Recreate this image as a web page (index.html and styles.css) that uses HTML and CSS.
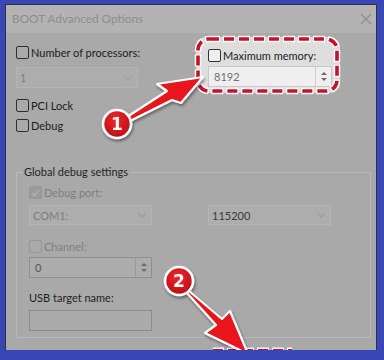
FILE: index.html
```html
<!DOCTYPE html>
<html>
<head>
<meta charset="utf-8">
<link rel="stylesheet" href="styles.css">
</head>
<body>
<div class="frame">
  <div class="titlebar">
    <span class="title">BOOT Advanced Options</span>
    <svg class="close" width="12" height="12" viewBox="0 0 12 12"><path d="M1 1L11 11M11 1L1 11" stroke="#8a8a8a" stroke-width="1.1" fill="none"/></svg>
  </div>
  <div class="body">
    <div class="top">
      <div class="left">
        <div class="check"><span class="box"></span><span>Number of processors:</span></div>
        <div class="combo dis c1"><span>1</span><svg width="10" height="6" viewBox="0 0 10 6"><path d="M1 1L5 5L9 1" stroke="#9c9c9c" stroke-width="1.2" fill="none"/></svg></div>
        <div class="check pci"><span class="box"></span><span>PCI Lock</span></div>
        <div class="check dbg"><span class="box"></span><span>Debug</span></div>
      </div>
      <div class="hl">
        <div class="check"><span class="box lightbox"></span><span>Maximum memory:</span></div>
        <div class="spin hlspin"><span class="val">8192</span><div class="btns"><span class="up"></span><span class="down"></span></div></div>
      </div>
    </div>
    <fieldset class="group">
      <legend>Global debug settings</legend>
      <div class="inner">
        <div class="check disc"><span class="box checked"><svg width="9" height="8" viewBox="0 0 9 8"><path d="M1 4L3.5 6.5L8 1" stroke="#b0b0b0" stroke-width="1.3" fill="none"/></svg></span><span>Debug port:</span></div>
        <div class="pair">
          <div class="combo dis gc"><span>COM1:</span><svg width="10" height="6" viewBox="0 0 10 6"><path d="M1 1L5 5L9 1" stroke="#9c9c9c" stroke-width="1.2" fill="none"/></svg></div>
          <div class="combo dis gc dark"><span>115200</span><svg width="10" height="6" viewBox="0 0 10 6"><path d="M1 1L5 5L9 1" stroke="#9c9c9c" stroke-width="1.2" fill="none"/></svg></div>
        </div>
        <div class="check disc chan"><span class="box disbox"></span><span>Channel:</span></div>
        <div class="spin gspin"><span class="val">0</span><div class="btns"><span class="up"></span><span class="down"></span></div></div>
        <div class="lbl">USB target name:</div>
        <div class="textin"></div>
      </div>
    </fieldset>
  </div>
  <svg class="annot" width="384" height="360" viewBox="0 0 384 360">
    <defs>
      <filter id="sh" x="-30%" y="-30%" width="160%" height="160%">
        <feDropShadow dx="1" dy="2" stdDeviation="1.6" flood-color="#000" flood-opacity="0.45"/>
      </filter>
      <radialGradient id="rg" cx="45%" cy="35%" r="70%">
        <stop offset="0" stop-color="#f2252b"/>
        <stop offset="1" stop-color="#b50c18"/>
      </radialGradient>
    </defs>
    <rect x="198" y="39" width="139" height="52" rx="11" fill="none" stroke="#fff" stroke-width="6.5" stroke-dasharray="12 3" stroke-dashoffset="1"/>
    <rect x="198" y="39" width="139" height="52" rx="11" fill="none" stroke="#c5122b" stroke-width="3.6" stroke-dasharray="10 5"/>
    <line x1="213" y1="351" x2="292" y2="351" stroke="#fff" stroke-width="7" stroke-dasharray="12 3" stroke-dashoffset="1"/>
    <line x1="213" y1="351" x2="292" y2="351" stroke="#c5122b" stroke-width="4" stroke-dasharray="10 5"/>
    <g filter="url(#sh)">
      <polygon points="127,117 167,91 157,84 203,77 181,103 172,100 130,121" fill="#e8121c" stroke="#fff" stroke-width="2.2" stroke-linejoin="round"/>
      <circle cx="117" cy="124" r="14" fill="url(#rg)" stroke="#fff" stroke-width="2.6"/>
      <text x="117" y="130" class="num">1</text>
      <polygon points="189,291 222,319 230,311 248,354 205,333 216,325 187,293" fill="#e8121c" stroke="#fff" stroke-width="2.2" stroke-linejoin="round"/>
      <circle cx="179" cy="281" r="14" fill="url(#rg)" stroke="#fff" stroke-width="2.6"/>
      <text x="179" y="287" class="num">2</text>
    </g>
  </svg>
</div>
</body>
</html>
```
FILE: styles.css
```css
* { box-sizing: border-box; }
html, body { margin: 0; padding: 0; }
body {
  width: 384px;
  height: 360px;
  overflow: hidden;
  background: #3a46b4;
  font-family: Lato, "Noto Sans", sans-serif;
  font-size: 11px;
  color: #1c1c1c;
}
.frame {
  position: relative;
  margin: 4px 0 0 5px;
  width: 372px;
  height: 346px;
  overflow: hidden;
  border: 1px solid #2c2f4a;
  border-bottom: none;
  background: #a9a9a9;
}
.titlebar {
  height: 28px;
  background: #b3b3b3;
  display: flex;
  align-items: center;
  justify-content: space-between;
  padding: 0 4px 0 6px;
  color: #8d8d8d;
}
.title { line-height: 16px; font-size: 11.8px; }
.body { padding: 0 0 0 10px; }
.top { display: flex; align-items: flex-start; gap: 58px; }
.left { width: 122px; padding-top: 13px; }
.hl {
  margin-top: 4px;
  width: 144px;
  padding: 12px 8px 6px 12px;
  background: #dedede;
  border-radius: 10px;
}
.check {
  display: flex;
  align-items: center;
  gap: 2px;
  height: 13px;
  line-height: 13px;
  white-space: nowrap;
}
.box {
  width: 13px;
  height: 13px;
  flex: none;
  border: 1px solid #2e2e2e;
  border-radius: 2px;
  display: flex;
  align-items: center;
  justify-content: center;
}
.lightbox { background: #efefef; border-color: #333; }
.checked { background: #9b9b9b; border-color: #979797; }
.disbox { border-color: #979797; }
.disc { color: #7f7f7f; }
.pci { margin-top: 11px; }
.dbg { margin-top: 7px; }
.combo {
  height: 21px;
  border: 1px solid #b5b5b5;
  background: #adadad;
  display: flex;
  align-items: center;
  justify-content: space-between;
  padding: 0 4px 0 3px;
  color: #7d7d7d;
}
.c1 { margin-top: 8px; }
.spin {
  display: flex;
  height: 21px;
  border: 1px solid #8f8f8f;
  background: #acacac;
}
.val { flex: 1; padding-left: 5px; line-height: 19px; color: #6f6f6f; }
.btns {
  width: 16px;
  border-left: 1px solid #9a9a9a;
  display: flex;
  flex-direction: column;
  align-items: center;
  justify-content: center;
  gap: 3px;
}
.up, .down { width: 0; height: 0; border-left: 3px solid transparent; border-right: 3px solid transparent; }
.up { border-bottom: 3px solid #6a6a6a; }
.down { border-top: 3px solid #6a6a6a; }
.hlspin { margin-top: 4px; width: 124px; border-color: #c8c8c8; background: #efefef; }
.hlspin .btns { border-left-color: #d0d0d0; }
.group {
  margin: 32px 0 0 0;
  width: 355px;
  border: 1px solid #b9b9b9;
  padding: 0 0 6px 0;
}
.group legend {
  margin-left: 5px;
  padding: 0 2px;
  line-height: 16px;
  color: #242424;
}
.inner { padding: 6px 0 0 12px; }
.pair { display: flex; gap: 56px; margin-top: 6px; }
.gc { width: 123px; height: 20px; }
.dark { color: #3a3a3a; }
.chan { margin-top: 15px; }
.gspin { margin-top: 4px; width: 123px; }
.gspin .val { color: #555; }
.lbl { margin-top: 13px; height: 14px; line-height: 14px; color: #1e1e1e; }
.textin { margin-top: 5px; width: 123px; height: 21px; border: 1px solid #8c8c8c; background: #ababab; }
.annot { position: absolute; left: -6px; top: -5px; pointer-events: none; }
.num { font-family: "DejaVu Sans", sans-serif; font-weight: bold; font-size: 17px; fill: #fff; text-anchor: middle; }
```
